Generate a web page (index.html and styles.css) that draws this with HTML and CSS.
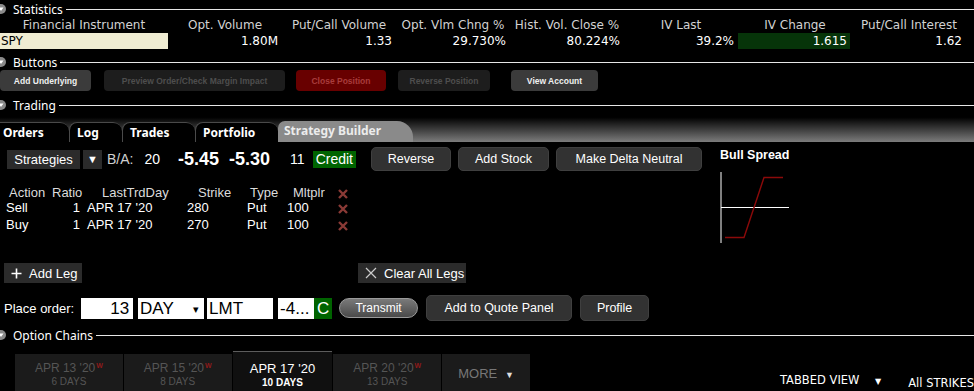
FILE: index.html
```html
<!DOCTYPE html>
<html lang="en">
<head>
    <meta charset="UTF-8">
    <title>Strategy Builder</title>
    <link rel="stylesheet" href="styles.css">
</head>
<body>
    <div class="section-head">
        <svg class="caret" width="12" height="12" viewBox="0 0 12 12"><circle cx="6" cy="6" r="5" fill="#8a8a8a"/><path d="M3.5 4.5h5L6 8z" fill="#fff"/></svg>
        <span class="section-label">Statistics</span>
        <i class="rule"></i>
    </div>
    <div class="stats">
        <div class="stats-h">Financial Instrument</div>
        <div class="stats-h">Opt. Volume</div>
        <div class="stats-h">Put/Call Volume</div>
        <div class="stats-h">Opt. Vlm Chng %</div>
        <div class="stats-h">Hist. Vol. Close %</div>
        <div class="stats-h">IV Last</div>
        <div class="stats-h">IV Change</div>
        <div class="stats-h">Put/Call Interest</div>
        <div class="stats-v symbol">SPY</div>
        <div class="stats-v">1.80M</div>
        <div class="stats-v">1.33</div>
        <div class="stats-v">29.730%</div>
        <div class="stats-v">80.224%</div>
        <div class="stats-v">39.2%</div>
        <div class="stats-v up">1.615</div>
        <div class="stats-v">1.62</div>
    </div>

    <div class="section-head">
        <svg class="caret" width="12" height="12" viewBox="0 0 12 12"><circle cx="6" cy="6" r="5" fill="#8a8a8a"/><path d="M3.5 4.5h5L6 8z" fill="#fff"/></svg>
        <span class="section-label">Buttons</span>
        <i class="rule"></i>
    </div>
    <div class="btn-row">
        <button class="tb-btn btn-underlying">Add Underlying</button>
        <button class="tb-btn btn-preview off">Preview Order/Check Margin Impact</button>
        <button class="tb-btn btn-close">Close Position</button>
        <button class="tb-btn btn-reverse off">Reverse Position</button>
        <button class="tb-btn btn-account">View Account</button>
    </div>

    <div class="section-head">
        <svg class="caret" width="12" height="12" viewBox="0 0 12 12"><circle cx="6" cy="6" r="5" fill="#8a8a8a"/><path d="M3.5 4.5h5L6 8z" fill="#fff"/></svg>
        <span class="section-label">Trading</span>
        <i class="rule"></i>
    </div>
    <div class="tab-strip">
        <div class="tab tab-orders">Orders</div>
        <div class="tab tab-log">Log</div>
        <div class="tab tab-trades">Trades</div>
        <div class="tab tab-portfolio">Portfolio</div>
        <div class="tab tab-builder active">Strategy Builder</div>
    </div>

    <div class="builder">
        <div class="builder-main">
            <div class="quote-row">
                <div class="strategies">Strategies</div>
                <div class="strategies-drop">&#9660;</div>
                <span class="ba-label">B/A:</span>
                <span class="ba-size first">20</span>
                <span class="ba-price first">-5.45</span>
                <span class="ba-price">-5.30</span>
                <span class="ba-size last">11</span>
                <span class="credit">Credit</span>
                <button class="sb-btn btn-rev">Reverse</button>
                <button class="sb-btn btn-stock">Add Stock</button>
                <button class="sb-btn btn-delta">Make Delta Neutral</button>
            </div>

            <div class="legs">
                <div class="lh h-action">Action</div>
                <div class="lh h-ratio">Ratio</div>
                <div class="lh h-date">LastTrdDay</div>
                <div class="lh h-strike">Strike</div>
                <div class="lh h-type">Type</div>
                <div class="lh h-mult">Mltplr</div>
                <div class="lh h-del"><svg class="del" width="10" height="10" viewBox="0 0 10 10"><path d="M1 1l8 8M9 1l-8 8"/></svg></div>

                <div class="lc c-action">Sell</div>
                <div class="lc c-ratio">1</div>
                <div class="lc c-date">APR 17 '20</div>
                <div class="lc c-strike">280</div>
                <div class="lc c-type">Put</div>
                <div class="lc c-mult">100</div>
                <div class="lc c-del"><svg class="del" width="10" height="10" viewBox="0 0 10 10"><path d="M1 1l8 8M9 1l-8 8"/></svg></div>

                <div class="lc c-action">Buy</div>
                <div class="lc c-ratio">1</div>
                <div class="lc c-date">APR 17 '20</div>
                <div class="lc c-strike">270</div>
                <div class="lc c-type">Put</div>
                <div class="lc c-mult">100</div>
                <div class="lc c-del"><svg class="del" width="10" height="10" viewBox="0 0 10 10"><path d="M1 1l8 8M9 1l-8 8"/></svg></div>
            </div>

            <div class="leg-actions">
                <div class="flat-btn add-leg">
                    <svg width="11" height="11" viewBox="0 0 11 11"><path d="M5.5 0.5v10M0.5 5.5h10" stroke="#fff" stroke-width="1.6"/></svg>
                    <span>Add Leg</span>
                </div>
                <div class="flat-btn clear-legs">
                    <svg width="12" height="12" viewBox="0 0 12 12"><path d="M1 1l10 10M11 1l-10 10" stroke="#ccc" stroke-width="1.2"/></svg>
                    <span>Clear All Legs</span>
                </div>
            </div>

            <div class="order-row">
                <span class="order-label">Place order:</span>
                <div class="field qty">13</div>
                <div class="field tif">DAY<span class="arrow">&#9662;</span></div>
                <div class="field otype">LMT</div>
                <div class="field price">-4...</div>
                <div class="field side">C</div>
                <button class="transmit">Transmit</button>
                <button class="sb-btn btn-quote">Add to Quote Panel</button>
                <button class="sb-btn btn-profile">Profile</button>
            </div>
        </div>

        <div class="builder-side">
            <div class="spread-title">Bull Spread</div>
            <svg class="payoff" width="72" height="76" viewBox="0 0 72 76">
                <path d="M1 2V73" stroke="#fff" stroke-width="1"/>
                <path d="M1 37.5H69" stroke="#fff" stroke-width="1"/>
                <path d="M5 67.5H24L44 7.5H63" stroke="#8b0a0a" stroke-width="1.4" fill="none"/>
            </svg>
        </div>
    </div>

    <div class="section-head chains-head">
        <svg class="caret" width="12" height="12" viewBox="0 0 12 12"><circle cx="6" cy="6" r="5" fill="#8a8a8a"/><path d="M3.5 4.5h5L6 8z" fill="#fff"/></svg>
        <span class="section-label">Option Chains</span>
        <i class="rule"></i>
    </div>
    <div class="chain-bar">
        <div class="expiry">
            <div class="exp-date">APR 13 '20<span class="weekly">W</span></div>
            <div class="exp-days">6 DAYS</div>
        </div>
        <div class="expiry">
            <div class="exp-date">APR 15 '20<span class="weekly">W</span></div>
            <div class="exp-days">8 DAYS</div>
        </div>
        <div class="expiry current">
            <div class="exp-date">APR 17 '20</div>
            <div class="exp-days">10 DAYS</div>
        </div>
        <div class="expiry">
            <div class="exp-date">APR 20 '20<span class="weekly">W</span></div>
            <div class="exp-days">13 DAYS</div>
        </div>
        <div class="expiry more">MORE <span class="more-arrow">&#9660;</span></div>
        <div class="view-select">TABBED VIEW <span class="view-arrow">&#9660;</span></div>
        <div class="strikes">All STRIKES</div>
    </div>
</body>
</html>
```

FILE: styles.css
```css
body {
    margin: 0;
    width: 974px;
    height: 391px;
    overflow: hidden;
    background-color: #000;
    color: #fff;
    font-family: 'Liberation Sans', Arial, sans-serif;
    white-space: nowrap;
}

button {
    font-family: inherit;
    cursor: pointer;
}

/* section headers */
.section-head {
    display: flex;
    align-items: center;
    height: 16px;
    font-family: 'Noto Sans', sans-serif;
    font-size: 12px;
}

.section-head:first-child {
    height: 18px;
}

.caret {
    margin-left: -5px;
    flex-shrink: 0;
}

.section-label {
    margin-left: 6px;
    color: #fff;
}

.rule {
    flex: 1;
    height: 1px;
    margin-left: 3px;
    background-color: #e6e6e6;
}

/* statistics */
.stats {
    display: grid;
    grid-template-columns: 168px repeat(7, 114px);
    font-family: 'DejaVu Sans', sans-serif;
    font-size: 12px;
}

.stats-h {
    height: 15px;
    line-height: 15px;
    text-align: center;
    color: #d2d2d2;
}

.stats-v {
    height: 16px;
    line-height: 16px;
    text-align: right;
    padding-right: 4px;
}

.stats-v.symbol {
    text-align: left;
    padding-left: 1px;
    background-color: #efecd2;
    color: #000;
}

.stats-v.up {
    background-color: #063409;
    margin-right: 2px;
    padding-right: 3px;
}

.stats + .section-head {
    margin-top: 5px;
}

/* buttons section */
.btn-row {
    display: flex;
    height: 21px;
}

.tb-btn {
    height: 21px;
    border: none;
    border-radius: 4px;
    font-size: 8.5px;
    font-weight: bold;
    padding: 0;
    color: #f0f0f0;
    background-color: #3b3b3b;
}

.tb-btn.off {
    background-color: #1d1d1d;
    color: #4e4e4e;
}

.btn-underlying { width: 91px; }
.btn-preview { width: 181px; margin-left: 13px; }
.btn-close {
    width: 90px;
    margin-left: 11px;
    background-color: #680000;
    color: #a83c3c;
}
.btn-reverse { width: 92px; margin-left: 12px; }
.btn-account { width: 87px; margin-left: 21px; }

.btn-row + .section-head {
    margin-top: 6px;
}

/* trading tabs */
.tab-strip {
    display: flex;
    align-items: flex-end;
    height: 29px;
    background: linear-gradient(to bottom, #000 0%, #000 15%, #7c7c7c 100%);
}

.tab {
    height: 20px;
    line-height: 19px;
    box-sizing: border-box;
    background-color: #000;
    border-top: 1px solid #4a4a4a;
    border-left: 1px solid #4a4a4a;
    border-radius: 8px 9px 0 0;
    font-family: 'Noto Sans', sans-serif;
    font-weight: bold;
    font-size: 12px;
    color: #fff;
    padding-left: 7px;
}

.tab-orders { width: 69px; padding-left: 3px; border-left: none; border-top-left-radius: 0; }
.tab-log { width: 53px; }
.tab-trades { width: 73px; }
.tab-portfolio { width: 83px; }

.tab.active {
    width: 135px;
    height: 21px;
    line-height: 20px;
    padding-left: 6px;
    background-color: #8a8a8a;
    border: none;
    border-radius: 7px 16px 0 0;
    color: #ececec;
}

/* strategy builder */
.builder {
    display: flex;
}

.builder-main {
    width: 712px;
}

.quote-row {
    display: flex;
    align-items: center;
    height: 24px;
    margin-top: 5px;
    font-size: 14px;
}

.strategies {
    width: 73px;
    height: 19px;
    line-height: 19px;
    margin-left: 7px;
    text-align: center;
    font-size: 13px;
    background-color: #2b2b2b;
}

.strategies-drop {
    width: 19px;
    height: 19px;
    line-height: 19px;
    margin-left: 3px;
    text-align: center;
    font-size: 11px;
    background-color: #2b2b2b;
}

.ba-label {
    margin-left: 5px;
    color: #d0d0d0;
}

.ba-size.first { margin-left: 11px; }
.ba-size.last { margin-left: 20px; }

.ba-price {
    margin-left: 10px;
    font-size: 18px;
    font-weight: bold;
}

.ba-price.first { margin-left: 18px; }

.credit {
    margin-left: 8px;
    height: 17px;
    line-height: 17px;
    padding: 0 3px;
    background-color: #006400;
}

.sb-btn {
    height: 24px;
    padding: 0;
    border: 1px solid #3f3f3f;
    border-radius: 5px;
    background-color: #323232;
    color: #fff;
    font-size: 12.5px;
}

.btn-rev { width: 80px; margin-left: 15px; }
.btn-stock { width: 91px; margin-left: 7px; }
.btn-delta { width: 146px; margin-left: 7px; }

.legs {
    display: grid;
    grid-template-columns: 48px 36px 96px 60px 45px 47px 22px;
    grid-template-rows: 13px 17px 17px;
    align-items: center;
    margin-top: 15px;
    font-size: 13px;
}

.lh {
    color: #dcdcdc;
}

.h-action { padding-left: 9px; }
.h-ratio { padding-left: 4px; }
.h-date { padding-left: 18px; }
.h-strike { padding-left: 18px; }
.h-type { padding-left: 10px; }
.h-mult { padding-left: 8px; }
.h-del { text-align: center; }

.c-action { padding-left: 6px; }
.c-ratio { text-align: right; padding-right: 4px; }
.c-date { padding-left: 3px; }
.c-strike { padding-left: 7px; }
.c-type { padding-left: 7px; }
.c-mult { padding-left: 2px; }
.c-del { text-align: center; }

.del {
    display: inline-block;
    vertical-align: middle;
    stroke: #8a3a36;
    stroke-width: 2.4;
}

.leg-actions {
    display: flex;
    margin-top: 30px;
    height: 20px;
}

.flat-btn {
    display: flex;
    align-items: center;
    height: 20px;
    box-sizing: border-box;
    background-color: #2b2b2b;
    font-size: 13px;
}

.add-leg {
    width: 78px;
    margin-left: 4px;
    padding-left: 7px;
}

.add-leg span { margin-left: 7px; }

.clear-legs {
    width: 108px;
    margin-left: 276px;
    padding-left: 7px;
}

.clear-legs span { margin-left: 7px; }

.order-row {
    display: flex;
    align-items: center;
    height: 26px;
    margin-top: 12px;
}

.order-label {
    margin-left: 4px;
    font-size: 13px;
}

.field {
    height: 21px;
    line-height: 22px;
    box-sizing: border-box;
    background-color: #fff;
    color: #000;
    font-size: 17px;
    padding-left: 2px;
}

.qty { width: 52px; margin-left: 7px; text-align: right; padding-right: 4px; }
.tif { width: 66px; margin-left: 5px; position: relative; }
.tif .arrow {
    position: absolute;
    right: 5px;
    top: 0;
    font-size: 11px;
}
.otype { width: 66px; margin-left: 3px; }
.price { width: 36px; margin-left: 5px; }
.side {
    width: 18px;
    background-color: #006400;
    color: #fff;
    text-align: center;
    padding-left: 0;
}

.transmit {
    width: 79px;
    height: 20px;
    margin-left: 7px;
    padding: 0;
    border: 1px solid #9a9a9a;
    border-radius: 10px;
    background: linear-gradient(to bottom, #7a7a7a, #4a4a4a);
    color: #fff;
    font-size: 12px;
}

.btn-quote { width: 146px; height: 26px; margin-left: 8px; }
.btn-profile { width: 69px; height: 26px; margin-left: 8px; }

.builder-side {
    margin-left: 8px;
    padding-top: 6px;
}

.spread-title {
    font-size: 12.5px;
    font-weight: bold;
    line-height: 14px;
}

.payoff {
    display: block;
    margin-top: 8px;
}

/* option chains */
.chains-head {
    margin-top: 6px;
}

.chain-bar {
    display: flex;
    align-items: flex-end;
    height: 40px;
    margin-top: 8px;
}

.expiry {
    width: 108px;
    height: 37px;
    margin-right: 1px;
    box-sizing: border-box;
    padding-top: 8px;
    background-color: #1b1b1b;
    color: #555;
    text-align: center;
}

.expiry:first-child {
    margin-left: 15px;
}

.exp-date {
    font-size: 12px;
    line-height: 13px;
    height: 13px;
}

.weekly {
    display: inline-block;
    font-size: 7px;
    line-height: 7px;
    font-weight: bold;
    color: #8e1a1a;
    vertical-align: top;
    margin-left: 1px;
}

.exp-days {
    font-size: 10px;
    line-height: 13px;
}

.expiry.current {
    width: 100px;
    height: 40px;
    padding-top: 10px;
    background-color: #101010;
    border-top: 1px solid #5c5c5c;
    color: #fff;
}

.expiry.current .exp-date {
    font-size: 13px;
    line-height: 14px;
    height: 14px;
}

.expiry.current .exp-days { font-weight: bold; }

.expiry.more {
    width: 88px;
    padding-top: 12px;
    font-size: 13px;
    color: #777;
}

.more-arrow {
    font-size: 9px;
    color: #ddd;
    margin-left: 4px;
}

.view-select {
    margin-left: 249px;
    margin-bottom: 4px;
    font-family: 'DejaVu Sans', sans-serif;
    font-size: 11.5px;
}

.view-arrow {
    font-size: 8px;
    margin-left: 12px;
}

.strikes {
    margin-left: 27px;
    margin-bottom: 1px;
    font-family: 'DejaVu Sans', sans-serif;
    font-size: 11.5px;
}
```
